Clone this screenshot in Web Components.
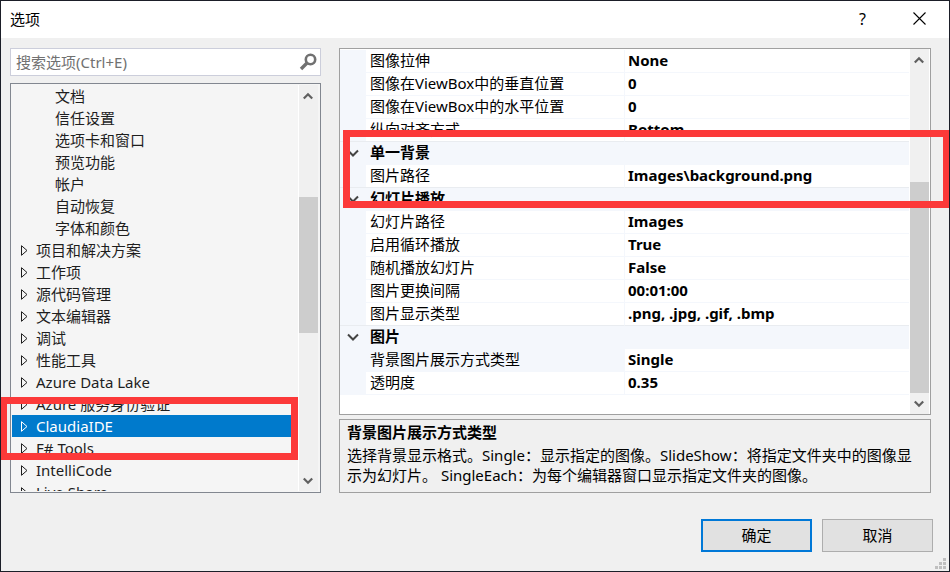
<!DOCTYPE html>
<html lang="zh-CN">
<head>
<meta charset="utf-8">
<title>选项</title>
<style>
html, body { margin: 0; height: 100%; }
body {
  font: 15px/22px "Noto Sans", "Noto Sans CJK SC", sans-serif;
  color: #000;
  --face: #f0f0f0;
  --accent: #0078d7;
  --grid-line: #f4f7fc;
}
</style>
</head>
<body>
<opt-dialog heading="选项">
  <opt-search slot="nav" label="搜索选项(Ctrl+E)"></opt-search>
  <opt-tree slot="nav">
    <opt-node level="2">文档</opt-node>
    <opt-node level="2">信任设置</opt-node>
    <opt-node level="2">选项卡和窗口</opt-node>
    <opt-node level="2">预览功能</opt-node>
    <opt-node level="2">帐户</opt-node>
    <opt-node level="2">自动恢复</opt-node>
    <opt-node level="2">字体和颜色</opt-node>
    <opt-node>项目和解决方案</opt-node>
    <opt-node>工作项</opt-node>
    <opt-node>源代码管理</opt-node>
    <opt-node>文本编辑器</opt-node>
    <opt-node>调试</opt-node>
    <opt-node>性能工具</opt-node>
    <opt-node>Azure Data Lake</opt-node>
    <opt-node>Azure 服务身份验证</opt-node>
    <opt-node selected>ClaudiaIDE</opt-node>
    <opt-node>F# Tools</opt-node>
    <opt-node>IntelliCode</opt-node>
    <opt-node>Live Share</opt-node>
  </opt-tree>
  <opt-property-grid slot="page"></opt-property-grid>
  <opt-description slot="page" heading="背景图片展示方式类型">选择背景显示格式。Single：显示指定的图像。SlideShow：将指定文件夹中的图像显示为幻灯片。 SingleEach：为每个编辑器窗口显示指定文件夹的图像。</opt-description>
  <opt-button slot="actions" primary>确定</opt-button>
  <opt-button slot="actions">取消</opt-button>
  <opt-highlight slot="marks" class="nav-mark"></opt-highlight>
  <opt-highlight slot="marks" class="page-mark"></opt-highlight>
</opt-dialog>

<script>
function define(name, html, setup) {
  const template = document.createElement('template');
  template.innerHTML = html;
  customElements.define(name, class extends HTMLElement {
    constructor() {
      super();
      this.attachShadow({ mode: 'open' }).append(template.content.cloneNode(true));
    }
    connectedCallback() {
      if (setup && !this.ready) { this.ready = true; setup(this, this.shadowRoot); }
    }
  });
}

define('opt-dialog', `
<style>
:host { display: flex; flex-direction: column; position: relative; box-sizing: border-box; height: 100vh; overflow: hidden; border: 1px solid #1b1e28; background: var(--face); }
header { display: flex; align-items: center; height: 37px; padding: 0 1px 0 9px; background: #fff; }
h1 { flex: 1; margin: 0; font-size: 15px; line-height: 20px; font-weight: 400; padding-bottom: 2px; }
header button { display: flex; align-items: center; justify-content: center; width: 57px; height: 37px; border: 0; padding: 0 0 2px; background: none; font: inherit; font-size: 16px; }
main { flex: 1; min-height: 0; display: grid; grid-template: minmax(0, 1fr) / minmax(0, 311fr) minmax(0, 592fr); gap: 18px; padding: 10px 18px 0 9px; }
nav, section { display: flex; flex-direction: column; min-height: 0; }
nav { gap: 7px; }
section { gap: 4px; }
footer { display: flex; justify-content: flex-end; gap: 10px; padding: 26px 16px 19px; }
.grip { position: absolute; right: 3px; bottom: 2px; }
</style>
<header><h1></h1><button aria-label="帮助">?</button>
<button aria-label="关闭"><svg width="13" height="13" fill="none" stroke="#000" stroke-width="1.1"><path d="M.5.5l12 12M12.5.5l-12 12"/></svg></button></header>
<main><nav><slot name="nav"></slot></nav><section><slot name="page"></slot></section></main>
<footer><slot name="actions"></slot></footer>
<svg class="grip" width="11" height="11" fill="#bfbfbf"><path d="M8 0h3v3h-3zM4 4h3v3h-3zM8 4h3v3h-3zM0 8h3v3h-3zM4 8h3v3h-3zM8 8h3v3h-3z"/></svg>
<slot name="marks"></slot>`,
(host, root) => { root.querySelector('h1').textContent = host.getAttribute('heading'); });

define('opt-search', `
<style>
:host { display: flex; align-items: center; box-sizing: border-box; height: 28px; border: 1px solid #cccedb; background: #fff; padding: 0 3px 0 5px; }
input { flex: 1; min-width: 0; border: 0; padding: 0; outline: 0; background: none; font: inherit; }
input::placeholder { color: #717171; opacity: 1; }
button { display: flex; border: 0; padding: 0; background: none; }
</style>
<input type="text"><button aria-label="搜索"><svg width="18" height="18" fill="none" stroke="#717171"><circle cx="11.500" cy="6.500" r="4.700" stroke-width="2.600"/><path d="M8 10l-6 6" stroke-width="3.400"/></svg></button>`,
(host, root) => {
  const input = root.querySelector('input');
  input.placeholder = host.getAttribute('label');
  input.setAttribute('aria-label', host.getAttribute('label'));
});

define('opt-scrollbar', `
<style>
:host { display: flex; flex-direction: column; flex: none; width: 19px; background: #f0f0f0; }
button { display: flex; align-items: center; justify-content: center; flex: none; height: 21px; border: 0; padding: 0; background: none; }
.thumb { background: #cdcdcd; }
</style>
<button aria-label="向上滚动"><svg width="11" height="8" fill="none" stroke="#606060" stroke-width="2.200"><path d="M.8 6.500l4.200-4.300 4.200 4.300"/></svg></button>
<div></div><div class="thumb"></div><div></div>
<button aria-label="向下滚动"><svg width="11" height="8" fill="none" stroke="#606060" stroke-width="2.200"><path d="M.8 1.500l4.200 4.300 4.200-4.300"/></svg></button>`,
(host, root) => {
  const parts = host.getAttribute('ratio').split(' ');
  root.querySelectorAll('div').forEach((part, i) => { part.style.flex = parts[i] + ' 0 0'; });
});

define('opt-tree', `
<style>
:host { display: flex; flex: 1; min-height: 0; box-sizing: border-box; border: 1px solid #828790; padding: 1px; background: #f5f5f5; color: #1e1e1e; }
div { flex: 1; min-width: 0; overflow: hidden; border-right: 1px solid #fff; }
opt-scrollbar { margin-right: 1px; }
</style>
<div role="tree"><slot></slot></div><opt-scrollbar ratio="91 137 137"></opt-scrollbar>`);

define('opt-node', `
<style>
:host { display: flex; align-items: center; gap: 8px; height: 22px; padding-left: 9px; white-space: nowrap; }
:host([level="2"]) { padding-left: 28px; }
:host([level="2"]) svg { visibility: hidden; }
:host([selected]) { background: #007acc; color: #fff; }
svg { flex: none; }
</style>
<svg width="7" height="11" fill="none" stroke="currentColor"><path d="M.5.700v9.600l5.500-4.800z"/></svg><span><slot></slot></span>`,
host => { host.setAttribute('role', 'treeitem'); });

define('opt-property-grid', `
<style>
:host { display: flex; flex: 1; min-height: 0; box-sizing: border-box; border: 1px solid #a0a0a0; background: #fff; }
.sheet { flex: 1; min-width: 0; overflow: hidden; padding: 1px 1px 0 0; }
opt-scrollbar { margin-right: 1px; }
table { width: 100%; table-layout: fixed; border-collapse: separate; border-spacing: 0; }
.mark { width: 26px; }
.name { width: 259px; }
th, td { box-sizing: border-box; height: 23px; padding: 0 0 2px 4px; line-height: 20px; text-align: left; font-weight: 400; white-space: nowrap; overflow: hidden; border-bottom: 1px solid var(--grid-line); }
td:first-child { padding: 0; background: var(--grid-line); }
tbody th { border-right: 1px solid var(--grid-line); }
td:last-child { padding-left: 3px; font-weight: 700; }
.last-in-group > * { border-bottom-color: #e9ecf0; }
tr.category > * { background: var(--grid-line); font-weight: 700; border-right: 0; }
tr.current th { background: var(--grid-line); }
td button { display: flex; align-items: center; justify-content: center; width: 25px; height: 22px; border: 0; padding: 0; background: none; }
</style>
<div class="sheet"><table><colgroup><col class="mark"><col class="name"><col></colgroup><tbody></tbody></table></div>
<opt-scrollbar ratio="112 211 0"></opt-scrollbar>`,
(host, root) => {
  const rows = [
    ['图像拉伸', 'None'],
    ['图像在ViewBox中的垂直位置', '0'],
    ['图像在ViewBox中的水平位置', '0'],
    ['纵向对齐方式', 'Bottom'],
    ['单一背景'],
    ['图片路径', 'Images\\background.png'],
    ['幻灯片播放'],
    ['幻灯片路径', 'Images'],
    ['启用循环播放', 'True'],
    ['随机播放幻灯片', 'False'],
    ['图片更换间隔', '00:01:00'],
    ['图片显示类型', '.png, .jpg, .gif, .bmp'],
    ['图片'],
    ['背景图片展示方式类型', 'Single'],
    ['透明度', '0.35']
  ];
  const body = root.querySelector('tbody');
  rows.forEach(([name, value], i) => {
    const row = body.insertRow();
    const mark = row.insertCell();
    const head = document.createElement('th');
    head.textContent = name;
    row.append(head);
    if (value === undefined) {
      row.className = 'category';
      head.colSpan = 2;
      head.scope = 'rowgroup';
      mark.innerHTML = '<button aria-label="折叠"><svg width="12" height="8" fill="none" stroke="#444" stroke-width="2"><path d="M1 1.500l5 5 5-5"/></svg></button>';
    } else {
      head.scope = 'row';
      row.insertCell().textContent = value;
      if (rows[i + 1] && rows[i + 1].length === 1) row.className = 'last-in-group';
      if (name === '背景图片展示方式类型') row.className = 'current';
    }
  });
});

define('opt-description', `
<style>
:host { display: block; flex: none; box-sizing: border-box; border: 1px solid #a0a0a0; padding: 2px 7px 7px; line-height: 20px; }
h2 { margin: 0 0 3px; font-size: 15px; font-weight: 700; }
p { margin: 0; }
</style>
<h2></h2><p><slot></slot></p>`,
(host, root) => { root.querySelector('h2').textContent = host.getAttribute('heading'); });

define('opt-button', `
<style>
:host { display: block; }
button { display: block; box-sizing: border-box; width: 111px; height: 33px; border: 1px solid #adadad; padding: 0 0 2px; background: #e1e1e1; color: #000; font: inherit; }
:host([primary]) button { border: 2px solid var(--accent); }
</style>
<button><slot></slot></button>`);

define('opt-highlight', `
<style>
:host { position: absolute; box-sizing: border-box; border: 7px solid #fc3939; pointer-events: none; }
:host(.nav-mark) { left: -1px; top: 396px; width: 298px; height: 63px; }
:host(.page-mark) { left: 342px; right: -1px; top: 129px; height: 78px; }
</style>`);
</script>
</body>
</html>
